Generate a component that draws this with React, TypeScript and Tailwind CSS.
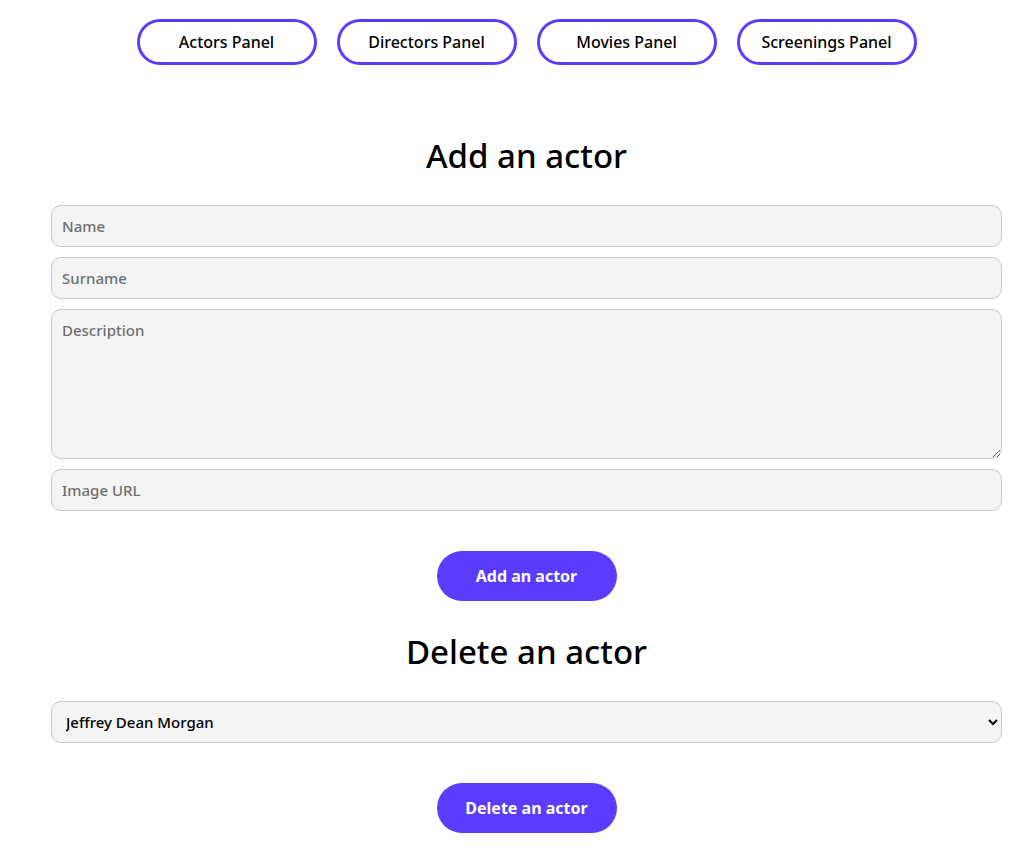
import React from 'react';

const navItems = ['Actors Panel', 'Directors Panel', 'Movies Panel', 'Screenings Panel'];

const fieldClass =
  'w-full h-[42px] rounded-[10px] border border-[#c8c8c8] bg-[#f4f4f4] px-[10px] text-[15px] font-medium text-black placeholder:text-[#6f6f6f] outline-none';

const App: React.FC = () => {
  return (
    <div className="min-h-screen bg-white pl-[51px] pr-[31px] font-['Noto_Sans','Lato',sans-serif] text-black">
      {/* Panel navigation */}
      <nav className="flex justify-center gap-5 pt-[19px]">
        {navItems.map((label) => (
          <button
            key={label}
            className="h-[46px] w-[180px] rounded-full border-[3px] border-[#5b3bfc] bg-white text-[16px] font-medium text-black"
          >
            {label}
          </button>
        ))}
      </nav>

      {/* Add form */}
      <h1 className="mt-[71px] h-[40px] text-center text-[33px] font-medium leading-[40px]">Add an actor</h1>
      <form className="mt-[29px] flex flex-col gap-[10px]" onSubmit={(e) => e.preventDefault()}>
        <input className={fieldClass} placeholder="Name" />
        <input className={fieldClass} placeholder="Surname" />
        <textarea
          className="h-[150px] w-full rounded-[10px] border border-[#c8c8c8] bg-[#f4f4f4] px-[10px] py-[9px] text-[15px] font-medium text-black placeholder:text-[#6f6f6f] outline-none"
          placeholder="Description"
        />
        <input className={fieldClass} placeholder="Image URL" />
        <div className="mt-[30px] flex justify-center">
          <button className="h-[50px] w-[180px] rounded-full bg-[#5b3bfc] text-[16px] font-bold text-white">
            Add an actor
          </button>
        </div>
      </form>

      {/* Delete form */}
      <h2 className="mt-[31px] h-[40px] text-center text-[33px] font-medium leading-[40px]">Delete an actor</h2>
      <div className="mt-[29px]">
        <select className="h-[42px] w-full rounded-[10px] border border-[#c8c8c8] bg-[#f4f4f4] pl-[10px] pr-[4px] text-[15px] font-medium text-black outline-none">
          <option>Jeffrey Dean Morgan</option>
        </select>
      </div>
      <div className="mt-[40px] flex justify-center pb-8">
        <button className="h-[50px] w-[180px] rounded-full bg-[#5b3bfc] text-[16px] font-bold text-white">
          Delete an actor
        </button>
      </div>
    </div>
  );
};

export default App;
